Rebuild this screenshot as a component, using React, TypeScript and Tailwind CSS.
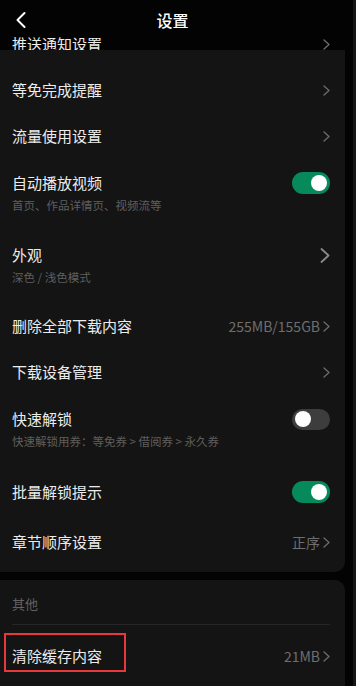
import React from "react";

const font = { fontFamily: '"Noto Sans CJK SC", "Noto Sans", sans-serif' };

function Chevron({ big = false }: { big?: boolean }) {
  if (big) {
    return (
      <svg width="10" height="15" viewBox="0 0 10 15" className="shrink-0">
        <polyline points="1.5,1 8.5,7.5 1.5,14" fill="none" stroke="#8a8a8a" strokeWidth="1.8" strokeLinecap="round" strokeLinejoin="round" />
      </svg>
    );
  }
  return (
    <svg width="7" height="11" viewBox="0 0 7 11" className="shrink-0">
      <polyline points="1,1 6,5.5 1,10" fill="none" stroke="#6a6a6a" strokeWidth="1.4" strokeLinecap="round" strokeLinejoin="round" />
    </svg>
  );
}

function Toggle({ on }: { on: boolean }) {
  return on ? (
    <div className="w-[38px] h-[22px] rounded-full bg-[#078a5b] flex items-center justify-end pr-[3px]">
      <div className="w-[16px] h-[16px] rounded-full bg-white" />
    </div>
  ) : (
    <div className="w-[38px] h-[21px] rounded-full bg-[#3d3d3d] flex items-center justify-start pl-[3px]">
      <div className="w-[16px] h-[16px] rounded-full bg-white" />
    </div>
  );
}

function Value({ text }: { text: string }) {
  return (
    <div className="flex items-center gap-[3px]">
      <span className="text-[14px] text-[#6e6e6e]" style={{ fontFamily: '"Noto Sans CJK SC", "Liberation Sans", sans-serif' }}>{text}</span>
      <Chevron />
    </div>
  );
}

function Row({ title, right, h = "h-[46px]" }: { title: string; right: React.ReactNode; h?: string }) {
  return (
    <div className={`${h} flex items-center justify-between pl-3 pr-[15px]`}>
      <span className="text-[15px] leading-[22px] text-[#ececec]">{title}</span>
      {right}
    </div>
  );
}

function SubRow({ title, sub, right }: { title: string; sub: string; right: React.ReactNode }) {
  return (
    <div className="h-[72px] flex flex-col pl-3 pr-[15px] pt-[13px]">
      <div className="flex items-center justify-between h-[22px]">
        <span className="text-[15px] leading-[22px] text-[#ececec]">{title}</span>
        {right}
      </div>
      <div className="mt-[3px] text-[11.5px] leading-[16px] text-[#5f5f5f]">{sub}</div>
    </div>
  );
}

export default function App() {
  return (
    <div className="w-[356px] h-[686px] bg-[#030303] overflow-hidden flex" style={font}>
      <div className="w-[345px] flex flex-col shrink-0">
        <div className="h-[50px] flex flex-col overflow-hidden shrink-0">
          <div className="h-[40px] shrink-0 flex items-center relative">
            <svg width="12" height="18" viewBox="0 0 12 18" className="ml-[15px]">
              <polyline points="9.5,2 2.5,9 9.5,16" fill="none" stroke="#ffffff" strokeWidth="2" strokeLinecap="round" strokeLinejoin="round" />
            </svg>
            <span className="absolute left-0 right-0 text-center text-[16px] font-medium text-white leading-[22px] pointer-events-none">设置</span>
          </div>
          <div className="-mt-[7px] h-[22px] flex items-center justify-between pl-3 pr-[15px] shrink-0">
            <span className="text-[15px] leading-[22px] text-[#ececec]">推送通知设置</span>
            <Chevron />
          </div>
        </div>

        <div className="bg-[#141414] rounded-br-[10px] pt-[17px] pb-[5px] shrink-0">
          <Row title="等免完成提醒" right={<Chevron />} />
          <Row title="流量使用设置" right={<Chevron />} />
          <SubRow title="自动播放视频" sub="首页、作品详情页、视频流等" right={<Toggle on />} />
          <SubRow title="外观" sub="深色 / 浅色模式" right={<Chevron big />} />
          <Row title="删除全部下载内容" right={<Value text="255MB/155GB" />} />
          <Row title="下载设备管理" right={<Chevron />} />
          <SubRow title="快速解锁" sub="快速解锁用券：等免券 > 借阅券 > 永久券" right={<Toggle on={false} />} />
          <Row title="批量解锁提示" right={<Toggle on />} h="h-[50px]" />
          <Row title="章节顺序设置" right={<Value text="正序" />} h="h-[50px]" />
        </div>

        <div className="mt-[8px] bg-[#141414] rounded-tr-[10px] flex-1 flex flex-col">
          <div className="h-[44px] flex items-end pl-3 pb-[11px]">
            <span className="text-[13px] leading-[18px] text-[#626262]">其他</span>
          </div>
          <div className="mx-3 mr-[15px] h-px bg-[#262626]" />
          <div className="h-[62px] flex items-center justify-between pl-3 pr-[15px] relative">
            <span className="text-[15px] leading-[22px] text-[#ececec]">清除缓存内容</span>
            <Value text="21MB" />
            <div className="absolute left-[4px] top-[8px] w-[122px] h-[39px] border-2 border-[#e8383b] pointer-events-none" />
          </div>
        </div>
      </div>
      <div className="flex-1" />
      <div className="w-[3px] bg-[#161616]" />
    </div>
  );
}
